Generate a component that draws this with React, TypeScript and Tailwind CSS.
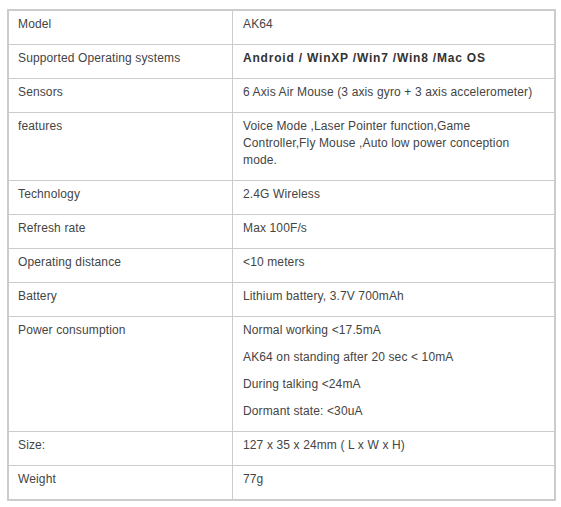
const specs: { label: string; value: React.ReactNode }[] = [
  { label: 'Model', value: 'AK64' },
  {
    label: 'Supported Operating systems',
    value: (
      <span className="font-bold tracking-[0.8px] text-[#333]">Android / WinXP /Win7 /Win8 /Mac OS</span>
    ),
  },
  { label: 'Sensors', value: '6 Axis Air Mouse (3 axis gyro + 3 axis accelerometer)' },
  {
    label: 'features',
    value: (
      <>
        Voice Mode ,Laser Pointer function,Game
        <br />
        Controller,Fly Mouse ,Auto low power conception
        <br />
        mode.
      </>
    ),
  },
  { label: 'Technology', value: '2.4G Wireless' },
  { label: 'Refresh rate', value: 'Max 100F/s' },
  { label: 'Operating distance', value: '<10 meters' },
  { label: 'Battery', value: 'Lithium battery, 3.7V 700mAh' },
  {
    label: 'Power consumption',
    value: [
      'Normal working <17.5mA',
      'AK64 on standing after 20 sec < 10mA',
      'During talking <24mA',
      'Dormant state: <30uA',
    ],
  },
  { label: 'Size:', value: '127 x 35 x 24mm ( L x W x H)' },
  { label: 'Weight', value: '77g' },
];

export default function App() {
  return (
    <div className="min-h-[507px] bg-white pl-[7px] pt-[9px] text-[12px] leading-[17px] tracking-[0.13px] text-[#444] font-['Liberation_Sans',Arial,sans-serif]">
      <div className="w-[549px] border-2 border-[#ccc]">
        {specs.map((row, i) => (
          <div
            key={row.label}
            className={`grid grid-cols-[224px_1fr] ${i < specs.length - 1 ? 'border-b border-[#ccc]' : ''}`}
          >
            <div className="border-r border-[#ccc] pl-[9px] pr-2 pt-[5px] pb-px">
              <p className="mb-[10px]">{row.label}</p>
            </div>
            <div className="pl-[10px] pr-[4px] pt-[5px] pb-px whitespace-nowrap">
              {Array.isArray(row.value) ? (
                row.value.map((line) => (
                  <p key={line} className="mb-[10px]">
                    {line}
                  </p>
                ))
              ) : (
                <p className="mb-[10px]">{row.value}</p>
              )}
            </div>
          </div>
        ))}
      </div>
    </div>
  );
}
